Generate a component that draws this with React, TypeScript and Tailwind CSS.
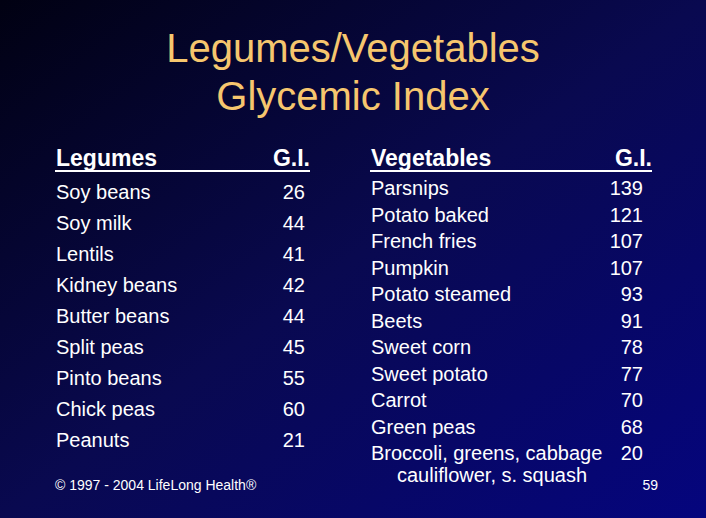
const legumes: [string, string][] = [
	["Soy beans", "26"],
	["Soy milk", "44"],
	["Lentils", "41"],
	["Kidney beans", "42"],
	["Butter beans", "44"],
	["Split peas", "45"],
	["Pinto beans", "55"],
	["Chick peas", "60"],
	["Peanuts", "21"],
];

const vegetables: [string, string][] = [
	["Parsnips", "139"],
	["Potato baked", "121"],
	["French fries", "107"],
	["Pumpkin", "107"],
	["Potato steamed", "93"],
	["Beets", "91"],
	["Sweet corn", "78"],
	["Sweet potato", "77"],
	["Carrot", "70"],
	["Green peas", "68"],
	["Broccoli, greens, cabbage", "20"],
];

function Header({ label }: { label: string }) {
	return (
		<div className="mt-[27px] flex justify-between border-b-2 border-white text-[23px] leading-[23px] font-bold">
			<span className="pl-px">{label}</span>
			<span>G.I.</span>
		</div>
	);
}

export default function App() {
	return (
		<div
			className="flex h-[518px] w-[706px] flex-col overflow-hidden bg-[linear-gradient(to_bottom_right,#010112_0%,#090950_50%,#05057e_100%)] text-white"
			style={{ fontFamily: '"Liberation Sans", Arial, sans-serif' }}
		>
			<h1 className="pt-[24px] text-center text-[40px] leading-[48px] text-[#f6c66e]">
				Legumes/Vegetables
				<br />
				Glycemic Index
			</h1>

			<div className="flex">
				{/* legumes column */}
				<div className="ml-[55px] flex w-[255px] flex-col">
					<Header label="Legumes" />
					<div className="mt-[5px] text-[20px] leading-[31px]">
						{legumes.map(([name, gi]) => (
							<div key={name} className="flex justify-between">
								<span className="pl-px">{name}</span>
								<span className="pr-[5px]">{gi}</span>
							</div>
						))}
					</div>
					<div className="mt-[21px] text-[14px] leading-[16px]">© 1997 - 2004 LifeLong Health®</div>
				</div>

				{/* vegetables column */}
				<div className="ml-[60px] flex w-[282px] flex-col">
					<Header label="Vegetables" />
					<div className="mt-[3px] text-[20px] leading-[26.5px]">
						{vegetables.map(([name, gi]) => (
							<div key={name} className="flex justify-between">
								<span className="pl-px">{name}</span>
								<span className="pr-[9px]">{gi}</span>
							</div>
						))}
						<div className="flex justify-between">
							<span className="pl-[27px] leading-[17px]">cauliflower, s. squash</span>
							<span className="-mr-[6px] mt-[10px] text-[14px] leading-[16px]">59</span>
						</div>
					</div>
				</div>
			</div>
		</div>
	);
}
